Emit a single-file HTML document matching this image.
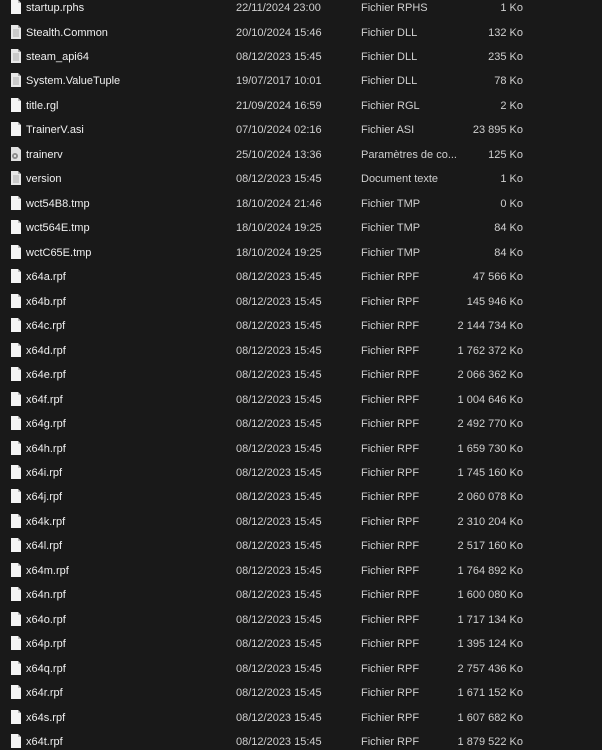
<!DOCTYPE html>
<html><head><meta charset="utf-8"><style>
html,body{margin:0;padding:0;background:#191919;width:602px;height:750px;overflow:hidden}
body{font-family:"Liberation Sans",sans-serif;font-size:11px;color:#dedede;position:relative}
.r{position:absolute;left:0;width:602px;height:16px;line-height:16px;margin-top:1px}
.r span{position:absolute;top:0;white-space:nowrap}
.n{left:26px;color:#f0f0f0}
.d{left:236px;color:#d0d0d0}
.t{left:361px;color:#d0d0d0}
.s{right:79px;color:#d0d0d0}
.i{position:absolute;left:11px;top:0px;width:10px;height:14px}
</style></head><body>
<svg width="0" height="0" style="position:absolute"><defs>
<symbol id="f" viewBox="0 0 10 14"><path d="M0 0H7L10 3V14H0Z" fill="#f4f4f4"/><path d="M7 0V3H10" fill="#bbb"/></symbol>
<symbol id="l" viewBox="0 0 10 14"><path d="M0 0H7L10 3V14H0Z" fill="#e8e8e8"/><path d="M7 0V3H10" fill="#aaa"/><path d="M2 5H8M2 7H8M2 9H8M2 11H8" stroke="#999" stroke-width="0.8"/></symbol>
<symbol id="g" viewBox="0 0 10 14"><path d="M0 0H7L10 3V14H0Z" fill="#e0e0e0"/><circle cx="4" cy="9" r="3" fill="#888"/><circle cx="4" cy="9" r="1.2" fill="#e0e0e0"/></symbol>
</defs></svg>
<div class="r" style="top:-1px"><svg class="i"><use href="#f"/></svg><span class="n">startup.rphs</span><span class="d">22/11/2024 23:00</span><span class="t">Fichier RPHS</span><span class="s">1 Ko</span></div>
<div class="r" style="top:23.5px"><svg class="i"><use href="#l"/></svg><span class="n">Stealth.Common</span><span class="d">20/10/2024 15:46</span><span class="t">Fichier DLL</span><span class="s">132 Ko</span></div>
<div class="r" style="top:48px"><svg class="i"><use href="#l"/></svg><span class="n">steam_api64</span><span class="d">08/12/2023 15:45</span><span class="t">Fichier DLL</span><span class="s">235 Ko</span></div>
<div class="r" style="top:72.4px"><svg class="i"><use href="#l"/></svg><span class="n">System.ValueTuple</span><span class="d">19/07/2017 10:01</span><span class="t">Fichier DLL</span><span class="s">78 Ko</span></div>
<div class="r" style="top:96.9px"><svg class="i"><use href="#f"/></svg><span class="n">title.rgl</span><span class="d">21/09/2024 16:59</span><span class="t">Fichier RGL</span><span class="s">2 Ko</span></div>
<div class="r" style="top:121.4px"><svg class="i"><use href="#f"/></svg><span class="n">TrainerV.asi</span><span class="d">07/10/2024 02:16</span><span class="t">Fichier ASI</span><span class="s">23 895 Ko</span></div>
<div class="r" style="top:145.8px"><svg class="i"><use href="#g"/></svg><span class="n">trainerv</span><span class="d">25/10/2024 13:36</span><span class="t">Paramètres de co...</span><span class="s">125 Ko</span></div>
<div class="r" style="top:170.3px"><svg class="i"><use href="#l"/></svg><span class="n">version</span><span class="d">08/12/2023 15:45</span><span class="t">Document texte</span><span class="s">1 Ko</span></div>
<div class="r" style="top:194.8px"><svg class="i"><use href="#f"/></svg><span class="n">wct54B8.tmp</span><span class="d">18/10/2024 21:46</span><span class="t">Fichier TMP</span><span class="s">0 Ko</span></div>
<div class="r" style="top:219.2px"><svg class="i"><use href="#f"/></svg><span class="n">wct564E.tmp</span><span class="d">18/10/2024 19:25</span><span class="t">Fichier TMP</span><span class="s">84 Ko</span></div>
<div class="r" style="top:243.7px"><svg class="i"><use href="#f"/></svg><span class="n">wctC65E.tmp</span><span class="d">18/10/2024 19:25</span><span class="t">Fichier TMP</span><span class="s">84 Ko</span></div>
<div class="r" style="top:268.2px"><svg class="i"><use href="#f"/></svg><span class="n">x64a.rpf</span><span class="d">08/12/2023 15:45</span><span class="t">Fichier RPF</span><span class="s">47 566 Ko</span></div>
<div class="r" style="top:292.6px"><svg class="i"><use href="#f"/></svg><span class="n">x64b.rpf</span><span class="d">08/12/2023 15:45</span><span class="t">Fichier RPF</span><span class="s">145 946 Ko</span></div>
<div class="r" style="top:317.1px"><svg class="i"><use href="#f"/></svg><span class="n">x64c.rpf</span><span class="d">08/12/2023 15:45</span><span class="t">Fichier RPF</span><span class="s">2 144 734 Ko</span></div>
<div class="r" style="top:341.6px"><svg class="i"><use href="#f"/></svg><span class="n">x64d.rpf</span><span class="d">08/12/2023 15:45</span><span class="t">Fichier RPF</span><span class="s">1 762 372 Ko</span></div>
<div class="r" style="top:366.1px"><svg class="i"><use href="#f"/></svg><span class="n">x64e.rpf</span><span class="d">08/12/2023 15:45</span><span class="t">Fichier RPF</span><span class="s">2 066 362 Ko</span></div>
<div class="r" style="top:390.5px"><svg class="i"><use href="#f"/></svg><span class="n">x64f.rpf</span><span class="d">08/12/2023 15:45</span><span class="t">Fichier RPF</span><span class="s">1 004 646 Ko</span></div>
<div class="r" style="top:415px"><svg class="i"><use href="#f"/></svg><span class="n">x64g.rpf</span><span class="d">08/12/2023 15:45</span><span class="t">Fichier RPF</span><span class="s">2 492 770 Ko</span></div>
<div class="r" style="top:439.5px"><svg class="i"><use href="#f"/></svg><span class="n">x64h.rpf</span><span class="d">08/12/2023 15:45</span><span class="t">Fichier RPF</span><span class="s">1 659 730 Ko</span></div>
<div class="r" style="top:463.9px"><svg class="i"><use href="#f"/></svg><span class="n">x64i.rpf</span><span class="d">08/12/2023 15:45</span><span class="t">Fichier RPF</span><span class="s">1 745 160 Ko</span></div>
<div class="r" style="top:488.4px"><svg class="i"><use href="#f"/></svg><span class="n">x64j.rpf</span><span class="d">08/12/2023 15:45</span><span class="t">Fichier RPF</span><span class="s">2 060 078 Ko</span></div>
<div class="r" style="top:512.9px"><svg class="i"><use href="#f"/></svg><span class="n">x64k.rpf</span><span class="d">08/12/2023 15:45</span><span class="t">Fichier RPF</span><span class="s">2 310 204 Ko</span></div>
<div class="r" style="top:537.3px"><svg class="i"><use href="#f"/></svg><span class="n">x64l.rpf</span><span class="d">08/12/2023 15:45</span><span class="t">Fichier RPF</span><span class="s">2 517 160 Ko</span></div>
<div class="r" style="top:561.8px"><svg class="i"><use href="#f"/></svg><span class="n">x64m.rpf</span><span class="d">08/12/2023 15:45</span><span class="t">Fichier RPF</span><span class="s">1 764 892 Ko</span></div>
<div class="r" style="top:586.3px"><svg class="i"><use href="#f"/></svg><span class="n">x64n.rpf</span><span class="d">08/12/2023 15:45</span><span class="t">Fichier RPF</span><span class="s">1 600 080 Ko</span></div>
<div class="r" style="top:610.8px"><svg class="i"><use href="#f"/></svg><span class="n">x64o.rpf</span><span class="d">08/12/2023 15:45</span><span class="t">Fichier RPF</span><span class="s">1 717 134 Ko</span></div>
<div class="r" style="top:635.2px"><svg class="i"><use href="#f"/></svg><span class="n">x64p.rpf</span><span class="d">08/12/2023 15:45</span><span class="t">Fichier RPF</span><span class="s">1 395 124 Ko</span></div>
<div class="r" style="top:659.7px"><svg class="i"><use href="#f"/></svg><span class="n">x64q.rpf</span><span class="d">08/12/2023 15:45</span><span class="t">Fichier RPF</span><span class="s">2 757 436 Ko</span></div>
<div class="r" style="top:684.2px"><svg class="i"><use href="#f"/></svg><span class="n">x64r.rpf</span><span class="d">08/12/2023 15:45</span><span class="t">Fichier RPF</span><span class="s">1 671 152 Ko</span></div>
<div class="r" style="top:708.6px"><svg class="i"><use href="#f"/></svg><span class="n">x64s.rpf</span><span class="d">08/12/2023 15:45</span><span class="t">Fichier RPF</span><span class="s">1 607 682 Ko</span></div>
<div class="r" style="top:733.1px"><svg class="i"><use href="#f"/></svg><span class="n">x64t.rpf</span><span class="d">08/12/2023 15:45</span><span class="t">Fichier RPF</span><span class="s">1 879 522 Ko</span></div>
</body></html>
